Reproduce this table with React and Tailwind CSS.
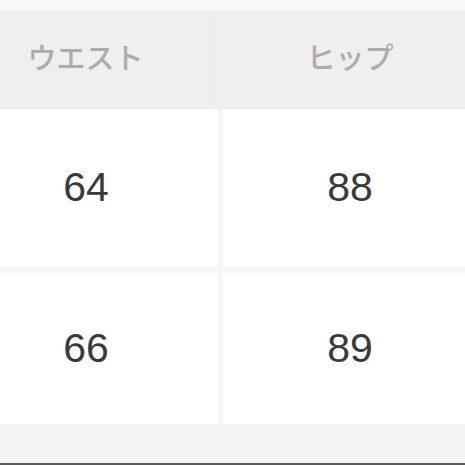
import React from "react";

const rows = [
  ["64", "88"],
  ["66", "89"],
];

export default function App() {
  return (
    <div className="w-[465px] h-[465px] overflow-hidden bg-white flex flex-col font-['Liberation_Sans',sans-serif]">
      <div className="h-[10px] bg-[#f8f8f8]" />
      <div className="h-[99px] bg-[#efefef] grid grid-cols-[214px_1fr] text-[29px] font-medium text-[#acacac] font-['Noto_Sans_CJK_JP',sans-serif]">
        <div className="flex items-center justify-center pr-[42px] pb-[5px] border-r border-[#ebebeb]">ウエスト</div>
        <div className="flex items-center justify-center pl-[21px] pb-[5px]">ヒップ</div>
      </div>
      {rows.map((r, i) => (
        <div
          key={i}
          className={
            i === 0
              ? "h-[164px] grid grid-cols-[218px_5px_1fr] border-b-[7px] border-[#f6f6f6]"
              : "h-[151px] grid grid-cols-[218px_5px_1fr]"
          }
        >
          <div className="flex items-center justify-center pr-[46px] text-[41px] text-[#3a3a3a]">{r[0]}</div>
          <div className="bg-[#f5f5f5]" />
          <div className="flex items-center justify-center pl-[12px] text-[41px] text-[#3a3a3a]">{r[1]}</div>
        </div>
      ))}
      <div className="flex-1 bg-[#f4f4f4]" />
      <div className="h-[2px] bg-[#5a5a5a]" />
    </div>
  );
}
